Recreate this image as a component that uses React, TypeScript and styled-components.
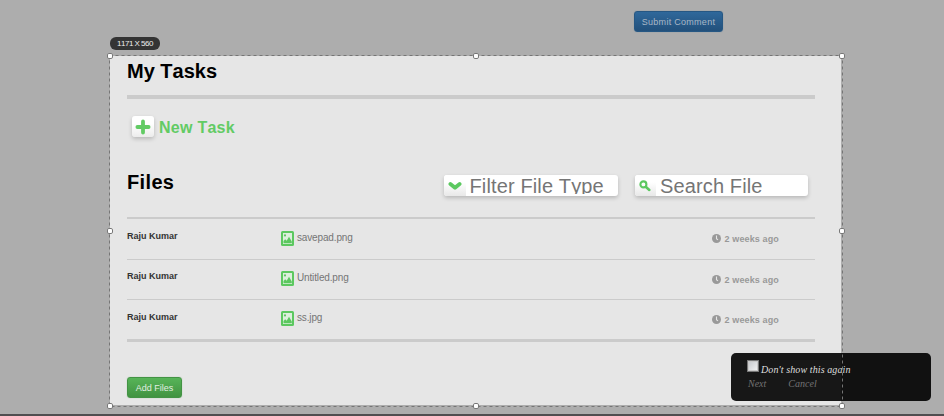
import React from 'react';
import styled, { createGlobalStyle } from 'styled-components';

const GlobalStyle = createGlobalStyle`
  * { box-sizing: border-box; }
  body {
    margin: 0;
    overflow: hidden;
    background: #adadad;
    font-family: "Liberation Sans", Arial, sans-serif;
    font-kerning: none;
  }
  button { font-family: inherit; }
`;

const Page = styled.div`
  position: relative;
  display: flex;
  flex-direction: column;
  width: 944px;
  height: 416px;
  overflow: hidden;
`;

const TopArea = styled.header`
  flex: none;
  height: 56px;
  padding: 11px 0 0 634px;
`;

const Button = styled.button<{ $tone: 'blue' | 'green' }>`
  display: flex;
  align-items: center;
  justify-content: center;
  flex: none;
  width: ${p => (p.$tone === 'blue' ? 89 : 55)}px;
  height: 21px;
  padding: ${p => (p.$tone === 'blue' ? 1 : 0)}px 0 0;
  border: 1px solid ${p => (p.$tone === 'blue' ? '#265783' : '#439344')};
  border-radius: 3px;
  background: ${p => (p.$tone === 'blue' ? 'linear-gradient(#2f689b, #22507b)' : 'linear-gradient(#57b458, #419341)')};
  box-shadow: 0 0 1px ${p => (p.$tone === 'blue' ? '#66809a' : '#80b280')};
  color: ${p => (p.$tone === 'blue' ? '#a9b7c5' : '#e2efe2')};
  font-size: 9px;
  line-height: 12px;
  letter-spacing: ${p => (p.$tone === 'blue' ? 0.28 : 0)}px;
  white-space: nowrap;
`;

const Panel = styled.main`
  display: flex;
  flex-direction: column;
  flex: none;
  width: 731px;
  height: 349px;
  margin-left: 110px;
  padding: 0 26px 0 17px;
  background: #e6e6e6;
`;

const Rule = styled.hr<{ $size: number }>`
  flex: none;
  width: 688px;
  height: ${p => p.$size}px;
  margin: 0;
  border: 0;
  background: #cbcbcb;
`;

const Heading = styled.h2<{ $spacing?: number }>`
  margin: 0;
  font-size: 20px;
  line-height: 23px;
  font-weight: 700;
  letter-spacing: ${p => p.$spacing ?? 0}px;
  color: #000;
`;

const TitleBar = styled.div`
  flex: none;
  height: 39px;
  padding-top: 4px;
`;

const NewTask = styled.div`
  display: flex;
  align-items: flex-start;
  gap: 5px;
  height: 21px;
  margin: 17px 0 0 5px;
  flex: none;
  color: #62cb64;
  font-size: 16px;
  line-height: 22px;
  font-weight: 700;
  letter-spacing: 0.26px;
`;

const NewTaskLabel = styled.span`
  padding-top: 1px;
`;

const IconTile = styled.span<{ $w: number; $attached?: boolean }>`
  display: flex;
  align-items: center;
  justify-content: center;
  flex: none;
  width: ${p => p.$w}px;
  height: 21px;
  border-radius: ${p => (p.$attached ? '3px 0 0 3px' : '3px')};
  background: linear-gradient(#fff 35%, ${p => (p.$attached ? '#e8e8e8' : '#ececec')});
  box-shadow: ${p => (p.$attached ? 'none' : '0 2px 4px rgba(0, 0, 0, .2)')};
`;

const FilesBar = styled.div`
  display: flex;
  flex: none;
  height: 80px;
  padding-top: 34px;
`;

const Fields = styled.div`
  display: flex;
  gap: 17px;
  margin: 4px 7px 0 auto;
`;

const Field = styled.label`
  display: flex;
  width: 173.5px;
  height: 21px;
  border-radius: 3px;
  background: #fff;
  box-shadow: 0 2px 4px rgba(0, 0, 0, .2);
`;

const FieldText = styled.span`
  flex: 1;
  height: 19px;
  overflow: hidden;
  padding-left: 4px;
  color: #757575;
  font-size: 20px;
  line-height: 22px;
  letter-spacing: 0.13px;
  white-space: nowrap;
`;

const Row = styled.div<{ $h: number }>`
  display: grid;
  grid-template-columns: 154px 431px 1fr;
  flex: none;
  height: ${p => p.$h}px;
`;

const Owner = styled.strong<{ $top: number }>`
  padding-top: ${p => p.$top}px;
  color: #333;
  font-size: 9px;
  line-height: 11px;
`;

const FileName = styled.span<{ $top: number }>`
  display: flex;
  align-items: flex-start;
  gap: 3px;
  padding-top: ${p => p.$top}px;
  color: #757575;
  font-size: 10px;
  line-height: 13px;
  letter-spacing: -0.15px;
`;

const Age = styled.span`
  display: flex;
  align-items: flex-start;
  gap: 3.5px;
  padding-top: 15px;
  color: #999;
  font-size: 9px;
  font-weight: 700;
  line-height: 11px;
  letter-spacing: 0.13px;
`;

const PanelFooter = styled.div`
  padding-top: 35px;
`;

const BottomEdge = styled.footer`
  height: 2px;
  margin-top: auto;
  background: #504e50;
`;

const SizeTag = styled.div`
  position: absolute;
  left: 110px;
  top: 37px;
  width: 50px;
  height: 13px;
  border-radius: 6px;
  background: #343434;
  color: #eee;
  font-size: 8px;
  line-height: 13px;
  letter-spacing: -0.5px;
  text-align: center;
  white-space: nowrap;
`;

const Selection = styled.svg`
  position: absolute;
  left: 106px;
  top: 52px;
  pointer-events: none;
`;

const Popup = styled.aside`
  position: absolute;
  left: 731px;
  top: 353px;
  width: 200px;
  height: 48px;
  padding: 7px 0 0 16px;
  border-radius: 5px;
  background: rgba(0, 0, 0, .9);
  font-family: "Liberation Serif", "Times New Roman", serif;
  font-style: italic;
  font-size: 10px;
  line-height: 13px;
  white-space: nowrap;
`;

const CheckLine = styled.label`
  display: flex;
  gap: 2px;
  height: 17px;
  color: #dedede;
  letter-spacing: 0.1px;
`;

const Check = styled.i`
  width: 12px;
  height: 12px;
  border: 1px solid #777;
  outline: 1px solid #c9c9c9;
  outline-offset: -2px;
  background: linear-gradient(135deg, #c3c6ca, #f5f5f5);
`;

const CheckText = styled.span`
  padding-top: 3px;
`;

const PopupActions = styled.div`
  display: flex;
  gap: 22px;
  padding-left: 1px;
  color: #737373;
`;

const ImageIcon = () => (
  <svg width="13" height="15" viewBox="0 0 13 15">
    <rect width="13" height="15" rx="1.5" fill="#5bc85f" />
    <path d="M2 2h9v11H2z" fill="#dcefdc" />
    <circle cx="4" cy="4.4" r="1.1" fill="#5bc85f" />
    <path d="M2.5 12.3V10l1.7-1.7 1.5 1.5L8 5.7l2.8 4.8v1.8z" fill="#5bc85f" />
  </svg>
);

const ClockIcon = () => (
  <svg width="9" height="9" viewBox="0 0 9 9">
    <circle cx="4.5" cy="4.5" r="4.5" fill="#999" />
    <path d="M4.5 1.5v3.2l1.5 1.2" fill="none" stroke="#e6e6e6" strokeWidth="1.1" />
  </svg>
);

const handles = [[4, 4], [370, 4], [736, 4], [4, 179], [736, 179], [4, 354], [370, 354], [736, 354]];

const files = [
  { name: 'savepad.png', height: 40, rule: 1, ownerTop: 12, fileTop: 12 },
  { name: 'Untitled.png', height: 39, rule: 1, ownerTop: 11, fileTop: 11 },
  { name: 'ss.jpg', height: 39, rule: 3, ownerTop: 12, fileTop: 11 },
];

export default function App() {
  return (
    <>
      <GlobalStyle />
      <Page>
        <TopArea>
          <Button $tone="blue">Submit Comment</Button>
        </TopArea>
        <Panel>
          <TitleBar><Heading>My Tasks</Heading></TitleBar>
          <Rule $size={4} />
          <NewTask>
            <IconTile $w={22}>
              <svg width="16" height="16" viewBox="0 0 16 16">
                <path d="M8 2.4v11.2M2.4 8h11.2" stroke="#62cb64" strokeWidth="3.8" strokeLinecap="round" />
              </svg>
            </IconTile>
            <NewTaskLabel>New Task</NewTaskLabel>
          </NewTask>
          <FilesBar>
            <Heading $spacing={0.35}>Files</Heading>
            <Fields>
              <Field>
                <IconTile $w={21.5} $attached>
                  <svg width="14" height="10" viewBox="0 0 14 10">
                    <path d="M2.4 3L7 6.7 11.6 3" fill="none" stroke="#5bc85f" strokeWidth="3.8" strokeLinecap="round" strokeLinejoin="round" />
                  </svg>
                </IconTile>
                <FieldText>Filter File Type</FieldText>
              </Field>
              <Field>
                <IconTile $w={21.5} $attached>
                  <svg width="12" height="12" viewBox="0 0 12 12">
                    <circle cx="4.4" cy="4.4" r="3" fill="none" stroke="#5bc85f" strokeWidth="2.1" />
                    <path d="M7 7l3.3 3" stroke="#5bc85f" strokeWidth="2.5" strokeLinecap="round" />
                  </svg>
                </IconTile>
                <FieldText>Search File</FieldText>
              </Field>
            </Fields>
          </FilesBar>
          <Rule $size={2} />
          {files.map(file => (
            <React.Fragment key={file.name}>
              <Row $h={file.height}>
                <Owner $top={file.ownerTop}>Raju Kumar</Owner>
                <FileName $top={file.fileTop}><ImageIcon />{file.name}</FileName>
                <Age><ClockIcon />2 weeks ago</Age>
              </Row>
              <Rule $size={file.rule} />
            </React.Fragment>
          ))}
          <PanelFooter><Button $tone="green">Add Files</Button></PanelFooter>
        </Panel>
        <BottomEdge />
        <SizeTag>1171 X 560</SizeTag>
        <Popup>
          <CheckLine><Check /><CheckText>Don't show this again</CheckText></CheckLine>
          <PopupActions><span>Next</span><span>Cancel</span></PopupActions>
        </Popup>
        <Selection width="740" height="360" viewBox="0 0 740 360">
          <rect x="3.5" y="3.5" width="733" height="351" fill="none" stroke="#757575" strokeDasharray="3 3" />
          {handles.map(([x, y]) => (
            <rect key={`${x}-${y}`} x={x - 2.5} y={y - 2.5} width="5" height="5" rx="1.4" fill="#fff" stroke="#777" />
          ))}
        </Selection>
      </Page>
    </>
  );
}
